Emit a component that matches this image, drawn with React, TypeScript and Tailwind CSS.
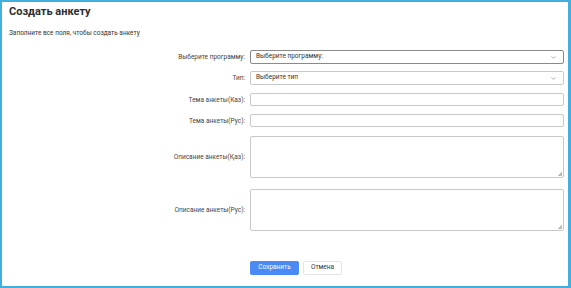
import { ChevronDown } from "lucide-react";

type RowProps = {
  label: string;
  children: React.ReactNode;
};

function Row({ label, children }: RowProps) {
  return (
    <div className="flex items-center">
      <div className="w-[248px] shrink-0 pr-[5px] text-right text-[6.5px] leading-[8px] text-[#444]">
        {label}
      </div>
      <div className="flex-1">{children}</div>
    </div>
  );
}

function SelectBox({ text, dark }: { text: string; dark?: boolean }) {
  return (
    <div
      className={`h-[14px] flex items-center justify-between rounded-[2px] border bg-white pl-[5px] pr-[6px] text-[6.5px] text-[#333] ${dark ? "border-[#8a8a8a]" : "border-[#c8c8c8]"}`}
    >
      <span>{text}</span>
      <ChevronDown className="w-[7px] h-[7px] text-[#777]" strokeWidth={2} />
    </div>
  );
}

function InputBox() {
  return <div className="h-[13px] rounded-[2px] border border-[#c8c8c8] bg-white" />;
}

function TextBox() {
  return (
    <div className="relative h-[42px] rounded-[2px] border border-[#c8c8c8] bg-white">
      <span className="absolute right-[1px] bottom-[1px] w-[4px] h-[4px] bg-[linear-gradient(135deg,transparent_50%,#bbb_50%)]" />
    </div>
  );
}

export default function App() {
  return (
    <div className="w-[571px] h-[288px] bg-white border-l-2 border-r-[3px] border-t-2 border-b-2 border-[#42b0de] font-['Roboto',sans-serif] flex flex-col">
      <div className="px-[7px] pt-[3px] text-[11px] leading-[14px] font-bold text-[#2d2d2d]">Создать анкету</div>
      <div className="px-[7px] mt-[10px] text-[6.5px] leading-[9px] text-[#333]">Заполните все поля, чтобы создать анкету</div>
      <div className="mt-[12px] pr-[4px] flex flex-col">
        <Row label="Выберите программу:">
          <SelectBox text="Выберите программу:" dark />
        </Row>
        <div className="h-[7px]" />
        <Row label="Тип:">
          <SelectBox text="Выберите тип" />
        </Row>
        <div className="h-[8px]" />
        <Row label="Тема анкеты(Каз):">
          <InputBox />
        </Row>
        <div className="h-[8px]" />
        <Row label="Тема анкеты(Рус):">
          <InputBox />
        </Row>
        <div className="h-[9px]" />
        <Row label="Описание анкеты(Қаз):">
          <TextBox />
        </Row>
        <div className="h-[11px]" />
        <Row label="Описание анкеты(Рус):">
          <TextBox />
        </Row>
      </div>
      <div className="pl-[248px] mt-[30px] flex gap-[4px]">
        <button className="w-[49px] h-[14px] rounded-[2px] bg-[#4a8af4] text-white text-[6.5px]">Сохранить</button>
        <button className="w-[39px] h-[14px] rounded-[2px] border border-[#e4e4e4] bg-white text-[#333] text-[6.5px]">Отмена</button>
      </div>
    </div>
  );
}
